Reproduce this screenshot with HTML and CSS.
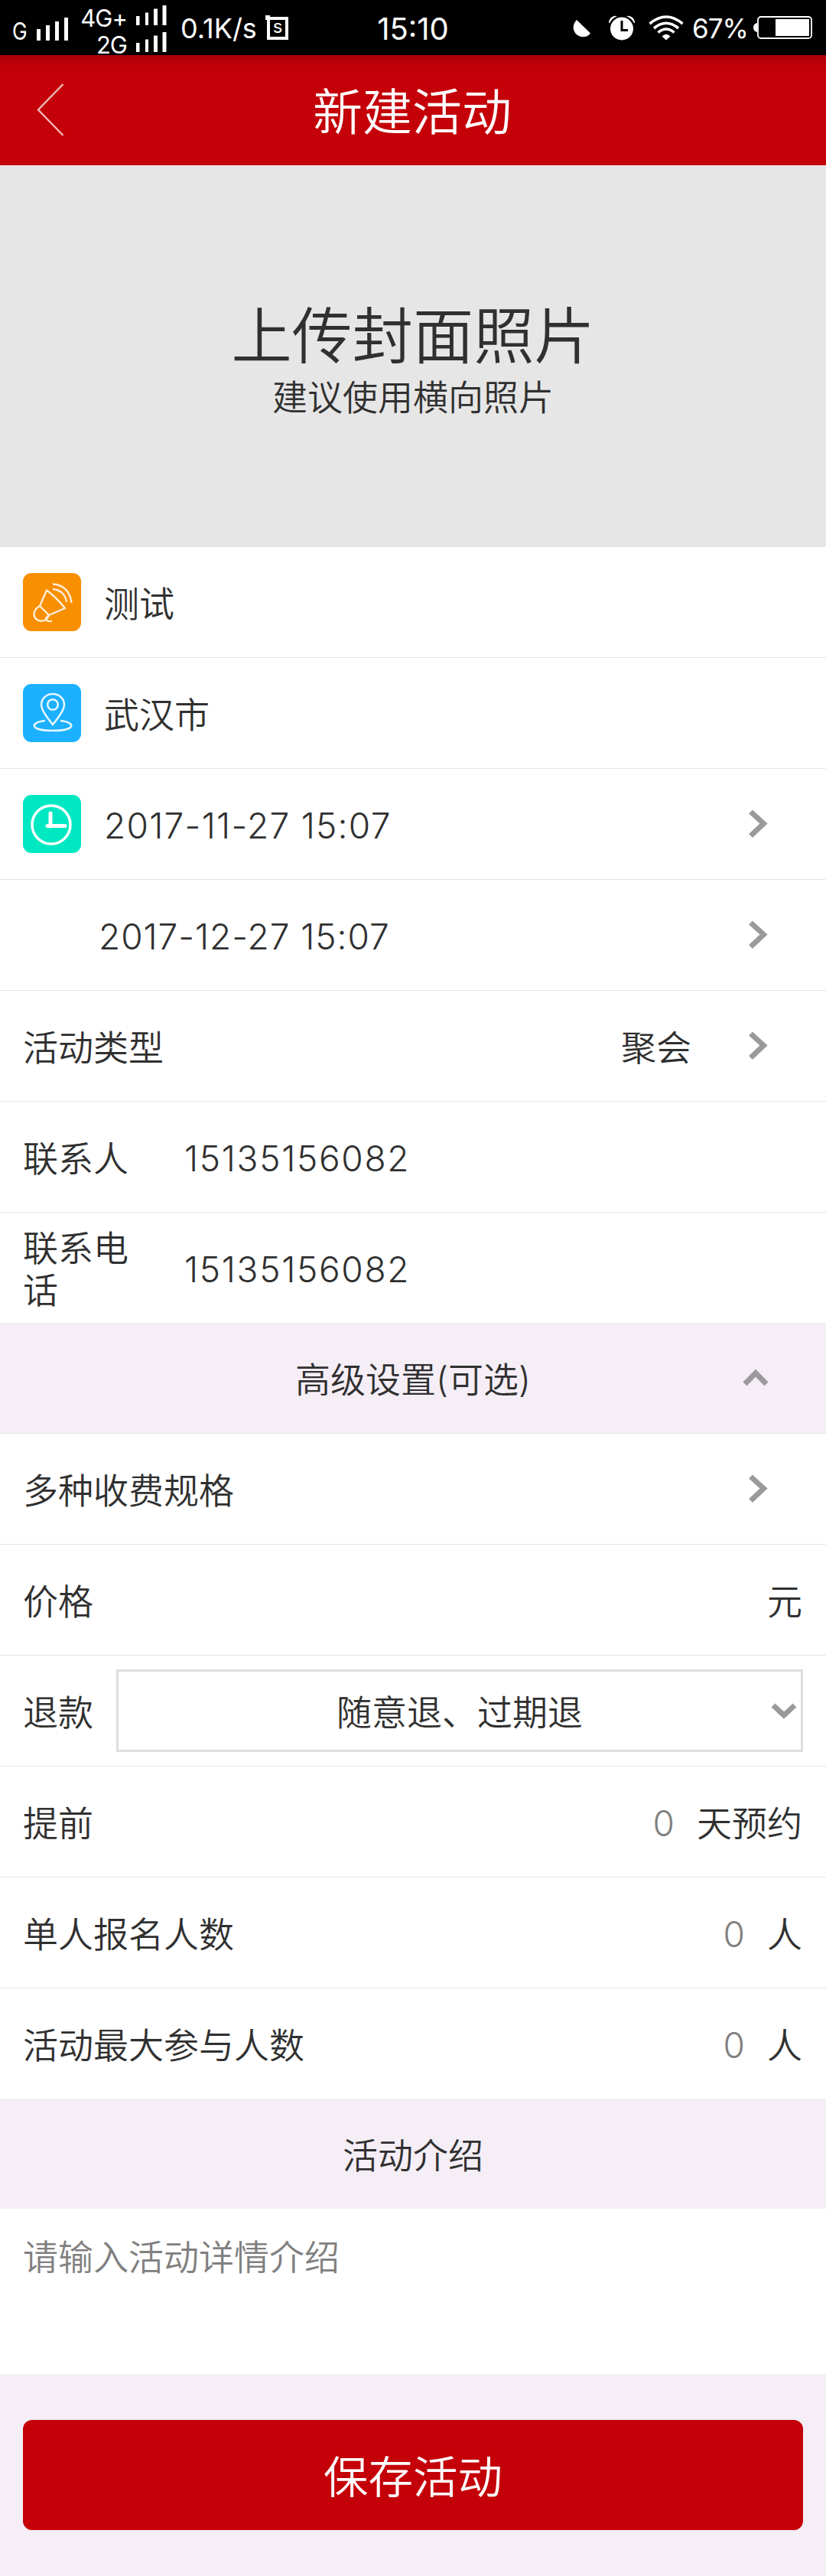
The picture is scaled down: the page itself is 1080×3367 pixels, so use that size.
FILE: index.html
```html
<!DOCTYPE html>
<html lang="zh-CN">
<head>
<meta charset="utf-8">
<title>新建活动</title>
<link rel="stylesheet" href="styles.css">
</head>
<body>
<div class="status">
  <div class="status-left">
    <span class="net-g">G</span>
    <svg class="bars-big" width="41" height="30" viewBox="0 0 41 30" fill="#fff"><path d="M0 15h5v15H0zM12 10h5v20h-5zM24 5h5v25h-5zM36 0h5v30h-5z"/></svg>
    <div class="sims">
      <div class="sim"><span>4G+</span><svg width="40" height="26" viewBox="0 0 40 26" fill="#fff"><path d="M0 14h4.500v12H0zM12 9.500h4v16.500h-4zM23 4.500h5v21.500h-5zM34.500 0h5v26h-5z"/></svg></div>
      <div class="sim"><span>2G</span><svg width="40" height="26" viewBox="0 0 40 26" fill="#fff"><path d="M0 14h4.500v12H0zM12 9.500h4v16.500h-4zM23 4.500h5v21.500h-5zM34.500 0h5v26h-5z"/></svg></div>
    </div>
    <span class="speed">0.1K/s</span>
    <span class="s-box">s</span>
  </div>
  <span class="time">15:10</span>
  <div class="status-right">
    <svg class="moon" width="23" height="24" viewBox="0 0 23 24"><path d="M5 1L23 18.500C19 23.500 13 24.500 8 22C0 18.500-2 8 5 1Z" fill="#fff"/></svg>
    <svg class="alarm" width="34" height="33" viewBox="0 0 34 33"><path d="M0 10A9 9 0 0 1 11 1Q4 4 1 10ZM34 10A9 9 0 0 0 23 1Q30 4 33 10Z" fill="#fff"/><circle cx="17" cy="17.500" r="15" fill="#fff"/><path d="M17 7v12.500h8" fill="none" stroke="#000" stroke-width="3"/></svg>
    <svg class="wifi" width="46" height="33" viewBox="0 0 46 33" fill="none" stroke="#fff" stroke-width="3.600"><path d="M1.500 11Q23-7 44.500 11M7 17Q23 3.500 39 17M12.500 22.500Q23 13.500 33.500 22.500"/><path d="M17.500 27.500Q23 22 28.500 27.500L23 32.500Z" fill="#fff" stroke="none"/></svg>
    <span class="pct">67%</span>
    <svg class="battery" width="77" height="30" viewBox="0 0 77 30"><path d="M5 9v12q-5-1-5-6t5-6ZM29 4h44v22H29Z" fill="#fff"/><rect x="6" y="1" width="70" height="28" rx="4" fill="none" stroke="#fff" stroke-width="1.800"/></svg>
  </div>
</div>
<header class="header">
  <svg class="back" width="36" height="70" viewBox="0 0 36 70" fill="none" stroke="#fff" stroke-opacity=".72" stroke-width="2.400"><path d="M34.500 1L2 34.500L34.500 68"/></svg>
  <h1>新建活动</h1>
</header>
<section class="cover">
  <div class="cover-title">上传封面照片</div>
  <div class="cover-sub">建议使用横向照片</div>
</section>
<main>
  <div class="row">
    <svg class="tile" viewBox="0 0 76 76"><rect width="76" height="76" rx="11" fill="#f88f00"/><g fill="none" stroke="#fff" stroke-opacity=".85" stroke-width="2.400" stroke-linejoin="round"><path d="M31 22.500Q44 32 55 46L34 55L22 43ZM22 43C15 47 12 54 17 60C23 65 31 63 34 55M34 55Q28 60 31 62q4 2 7 .500M39 14.500C53 15 62 25 63.500 39M39 21C50 22 56 29 57 38"/></g></svg>
    <span class="value">测试</span>
  </div>
  <div class="row">
    <svg class="tile" viewBox="0 0 76 76"><rect width="76" height="76" rx="11" fill="#1cb0ff"/><g fill="none" stroke="#fff" stroke-opacity=".88" stroke-width="2.600"><path d="M39 53Q24 35 24 27A15 14 0 0 1 54 27Q54 35 39 53Z"/><circle cx="39" cy="27" r="6.800"/><path d="M29 48C9 50 8 61 39 61C70 61 69 50 49 48"/></g></svg>
    <span class="value">武汉市</span>
  </div>
  <div class="row">
    <svg class="tile" viewBox="0 0 76 76"><rect width="76" height="76" rx="11" fill="#00e8c2"/><g fill="none" stroke="#fff" stroke-width="3.500"><circle cx="37" cy="39" r="25"/><path d="M36 24v17M32 40.500h23" stroke-width="5" stroke-linecap="round"/></g></svg>
    <span class="value date">2017-11-27 15:07</span>
    <svg class="chev" viewBox="0 0 26 38"><path d="M2.500 3L19.500 18.500L2.500 34.500"/></svg>
  </div>
  <div class="row">
    <span class="date end">2017-12-27 15:07</span>
    <svg class="chev" viewBox="0 0 26 38"><path d="M2.500 3L19.500 18.500L2.500 34.500"/></svg>
  </div>
  <div class="row">
    <span>活动类型</span>
    <span class="type">聚会</span>
    <svg class="chev near" viewBox="0 0 26 38"><path d="M2.500 3L19.500 18.500L2.500 34.500"/></svg>
  </div>
  <div class="row"><span class="label">联系人</span><span class="phone">15135156082</span></div>
  <div class="row last"><span class="label">联系电话</span><span class="phone">15135156082</span></div>
  <div class="band band-line">
    <span>高级设置(可选)</span>
    <svg class="chev-up" width="34" height="24" viewBox="0 0 34 24"><path d="M3 20L17 5.500L31 20"/></svg>
  </div>
  <div class="row">
    <span>多种收费规格</span>
    <svg class="chev" viewBox="0 0 26 38"><path d="M2.500 3L19.500 18.500L2.500 34.500"/></svg>
  </div>
  <div class="row"><span>价格</span><span class="unit">元</span></div>
  <div class="row">
    <span>退款</span>
    <div class="select"><span>随意退、过期退</span>
      <svg class="chev-down" width="34" height="24" viewBox="0 0 34 24"><path d="M3 4L17 17L31 4"/></svg></div>
  </div>
  <div class="row"><span>提前</span><span class="num">0</span><span>天预约</span></div>
  <div class="row"><span>单人报名人数</span><span class="num">0</span><span>人</span></div>
  <div class="row last"><span>活动最大参与人数</span><span class="num">0</span><span>人</span></div>
  <div class="band"><span>活动介绍</span></div>
  <div class="intro">请输入活动详情介绍</div>
</main>
<footer class="footer"><button class="save">保存活动</button></footer>
</body>
</html>
```
FILE: styles.css
```css
* { box-sizing: border-box; }
body {
  margin: 0;
  width: 1080px;
  background: #f5eef6;
  color: #303030;
  font: 350 46px/55px Inter, "Noto Sans CJK SC", sans-serif;
}
svg { display: block; flex: none; }
span { white-space: nowrap; }

.status {
  display: grid;
  grid-template-columns: 1fr auto 1fr;
  height: 72px;
  background: #000;
  color: #fff;
  font-weight: 400;
  line-height: 1;
}
.status-left, .status-right { display: flex; align-items: center; }
.net-g { width: 31px; margin: 9px 0 0 16px; font-size: 31px; font-weight: 400; transform: scaleX(.85); transform-origin: left; }
.bars-big { margin: 4px 17px 0 1px; }
.sims { width: 112px; height: 72px; padding-top: 7px; display: flex; flex-direction: column; gap: 9px; }
.sim { display: flex; justify-content: flex-end; gap: 12px; height: 26px; }
.sim span { font-size: 31px; letter-spacing: -1px; line-height: 34px; }
.speed { margin: 2px 0 0 18px; width: 113px; font-size: 36px; }
.s-box { position: relative; width: 28px; height: 30px; margin-top: 2px; border: 4px solid #fff; font-size: 24px; line-height: 18px; text-align: center; }
.s-box::before { content: ""; position: absolute; left: -6px; top: -6px; width: 6px; height: 6px; background: #fff; }
.time { align-self: center; font-size: 40px; padding-top: 3px; }
.status-right { justify-content: flex-end; padding-right: 18px; }
.moon { margin: 2px 24px 0 0; }
.alarm { margin-right: 18px; }
.wifi { margin-right: 11px; }
.pct { width: 80px; font-size: 35px; letter-spacing: -1px; margin-top: 2px; }

.header {
  display: grid;
  grid-template-columns: 140px 1fr 140px;
  align-items: center;
  height: 144px;
  color: #fff;
  background: linear-gradient(#a60006, #b60007 6px, #be0008 14px, #c40008 26px) #c40008;
}
.back { margin-left: 48px; }
h1 { margin: 0; padding: 6px 2px 0 0; font-size: 65px; font-weight: 350; line-height: 80px; text-align: center; }

.cover { height: 499px; padding-top: 175px; background: #e6e6e6; text-align: center; }
.cover-title { font-size: 79.200px; line-height: 96px; }
.cover-sub { margin-top: 5px; }

main { background: #fff; }
.row { display: flex; align-items: center; height: 145px; padding: 0 31px 0 30px; border-bottom: 1px solid #e6e6e6; }
.row span, .band span { padding-top: 4px; }
.row.last { height: 144px; border: 0; }
.tile { width: 76px; height: 76px; margin-right: 30px; }
.date, .phone, .num { font-weight: 300; }
.date { letter-spacing: 1.270px; }
.date.end { margin-left: 99px; letter-spacing: .950px; }
.chev { width: 26px; height: 38px; margin: 0 44px 0 auto; }
.chev path, .chev-up path, .chev-down path { fill: none; stroke: #9b999b; stroke-width: 7; }
.type { margin-left: auto; }
.chev.near { margin-left: 75px; }
.row .label { width: 150px; margin-right: 61px; white-space: normal; }
.phone { letter-spacing: 1.700px; }
.unit, .num { margin-left: auto; }
.num { color: #808080; margin-right: 29px; }

.band { position: relative; display: flex; align-items: center; justify-content: center; height: 144px; background: #f5eef6; }
.band-line { height: 145px; border-bottom: 1px solid #e6e6e6; }
.chev-up { position: absolute; right: 75px; top: 60px; }
.select { position: relative; flex: 1; display: flex; align-items: center; justify-content: center; height: 108px; margin: 0 -1px 0 30px; border: 3px solid #dedede; }
.chev-down { position: absolute; right: 5px; top: 40px; }
.intro { height: 216px; padding: 36px 30px; color: #808080; }

.footer { height: 264px; padding: 60px 30px; }
.save { display: block; width: 100%; height: 144px; padding: 4px 0 0; border: 0; border-radius: 12px; background: #c40008; color: #fff; font: inherit; font-size: 58.500px; }
```
